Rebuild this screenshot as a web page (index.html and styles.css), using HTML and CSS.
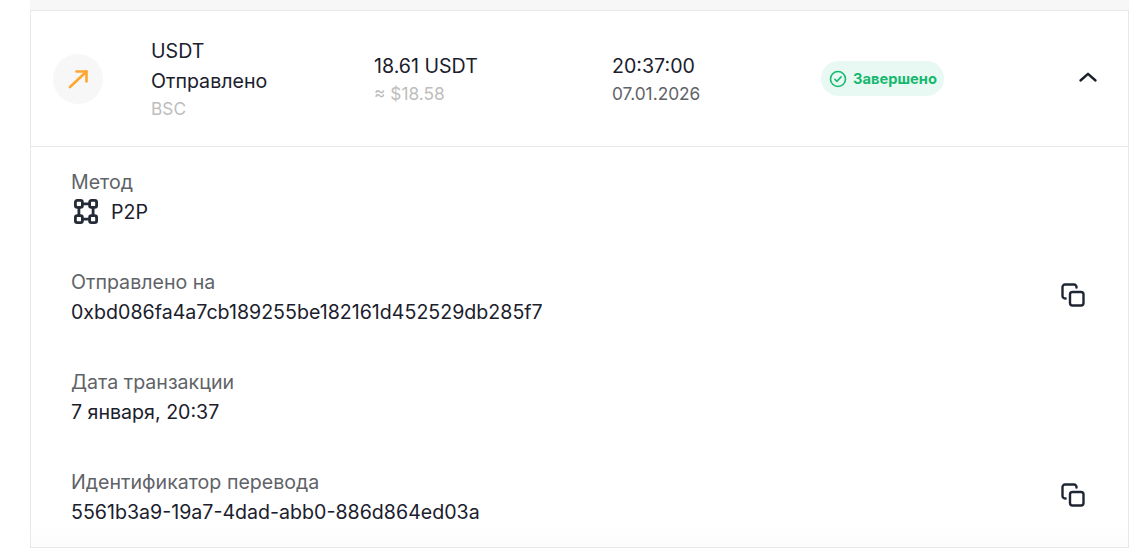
FILE: index.html
```html
<!DOCTYPE html>
<html lang="ru">
<head>
    <meta charset="UTF-8">
    <meta name="viewport" content="width=device-width, initial-scale=1.0">
    <title>Транзакция</title>
    <link rel="stylesheet" href="styles.css">
</head>
<body>
    <div class="top-strip"></div>
    <div class="tx-card">
        <div class="tx-row">
            <div class="tx-icon">
                <svg width="24" height="24" viewBox="0 0 24 24" fill="none" stroke="#ffa630" stroke-width="2.6" stroke-linecap="round" stroke-linejoin="round">
                    <path d="M4 20 L20.5 4.5"/>
                    <path d="M10.5 4.5 H20.5 V14.5"/>
                </svg>
            </div>
            <div class="tx-name">
                <div>USDT</div>
                <div>Отправлено</div>
                <div class="tx-muted">BSC</div>
            </div>
            <div class="tx-amount">
                <div>18.61 USDT</div>
                <div class="tx-muted">≈ $18.58</div>
            </div>
            <div class="tx-time">
                <div>20:37:00</div>
                <div class="tx-date">07.01.2026</div>
            </div>
            <div class="tx-status">
                <span class="status-pill">
                    <svg width="18" height="18" viewBox="0 0 18 18" fill="none" stroke="#16b96f" stroke-width="1.6" stroke-linecap="round" stroke-linejoin="round">
                        <circle cx="9" cy="9" r="7.5"/>
                        <path d="M5.9 9.3 L8 11.3 L12.1 6.9"/>
                    </svg>
                    Завершено
                </span>
            </div>
            <div class="tx-toggle">
                <svg width="20" height="12" viewBox="0 0 20 12" fill="none" stroke="#1a202c" stroke-width="2.4" stroke-linecap="round" stroke-linejoin="round">
                    <path d="M2.5 9.5 L10 2.8 L17.5 9.5"/>
                </svg>
            </div>
        </div>
        <div class="tx-details">
            <div class="detail">
                <div class="detail-text">
                    <div class="detail-label">Метод</div>
                    <div class="detail-method">
                        <svg width="28" height="28" viewBox="0 0 28 28" fill="none" stroke="#252b37" stroke-width="2.8" stroke-linejoin="round">
                            <rect x="4.4" y="2.4" width="7" height="7" rx="1.8"/>
                            <rect x="18.6" y="2.4" width="7" height="7" rx="1.8"/>
                            <rect x="4.4" y="17.6" width="7" height="7" rx="1.8"/>
                            <rect x="18.6" y="17.6" width="7" height="7" rx="1.8"/>
                            <path d="M11.4 5.9 H18.6 M11.4 21.1 H18.6 M7.9 9.4 V17.6 M22.1 9.4 V17.6"/>
                        </svg>
                        <span>P2P</span>
                    </div>
                </div>
            </div>
            <div class="detail">
                <div class="detail-text">
                    <div class="detail-label">Отправлено на</div>
                    <div>0xbd086fa4a7cb189255be182161d452529db285f7</div>
                </div>
                <svg class="copy-icon" width="24" height="24" viewBox="0 0 24 24" fill="none" stroke="#1f2633" stroke-width="2.4" stroke-linecap="round" stroke-linejoin="round">
                    <rect x="9" y="9" width="13.5" height="13.5" rx="2.5"/>
                    <path d="M4.6 15.5 H4 A2.5 2.5 0 0 1 1.5 13 V4 A2.5 2.5 0 0 1 4 1.5 H13 A2.5 2.5 0 0 1 15.5 4 V4.6"/>
                </svg>
            </div>
            <div class="detail">
                <div class="detail-text">
                    <div class="detail-label">Дата транзакции</div>
                    <div>7 января, 20:37</div>
                </div>
            </div>
            <div class="detail">
                <div class="detail-text">
                    <div class="detail-label">Идентификатор перевода</div>
                    <div>5561b3a9-19a7-4dad-abb0-886d864ed03a</div>
                </div>
                <svg class="copy-icon" width="24" height="24" viewBox="0 0 24 24" fill="none" stroke="#1f2633" stroke-width="2.4" stroke-linecap="round" stroke-linejoin="round">
                    <rect x="9" y="9" width="13.5" height="13.5" rx="2.5"/>
                    <path d="M4.6 15.5 H4 A2.5 2.5 0 0 1 1.5 13 V4 A2.5 2.5 0 0 1 4 1.5 H13 A2.5 2.5 0 0 1 15.5 4 V4.6"/>
                </svg>
            </div>
        </div>
    </div>
</body>
</html>
```

FILE: styles.css
```css
/* Page */
html, body {
    height: 100%;
}

body {
    margin: 0;
    padding: 0 6px 0 30px;
    overflow: hidden;
    background: #fff;
    color: #1a202c;
    font-family: 'Inter', sans-serif;
    font-size: 19.6px;
    line-height: 30px;
}

.top-strip {
    height: 10px;
    background: #f7f7f7;
}

/* Card */
.tx-card {
    border: 1px solid #e8e8e8;
}

.tx-row {
    display: grid;
    grid-template-columns: 98px 223px 238px 209px 1fr 40px;
    align-items: center;
    height: 135px;
    padding: 0 30px 0 22px;
    border-bottom: 1px solid #e8e8e8;
}

.tx-icon {
    display: flex;
    align-items: center;
    justify-content: center;
    width: 50px;
    height: 50px;
    border-radius: 50%;
    background: #f7f7f7;
}

.tx-muted {
    color: #bdbdbd;
    font-size: 17.3px;
    line-height: 26px;
}

.tx-date {
    color: #5f6368;
    font-size: 17.3px;
    line-height: 26px;
}

/* Status */
.status-pill {
    display: inline-flex;
    align-items: center;
    gap: 6px;
    height: 35px;
    padding: 0 7px 0 8px;
    border-radius: 18px;
    background: #e8f8f2;
    color: #16b96f;
    font-size: 14.7px;
    font-weight: 700;
}

.tx-toggle {
    display: flex;
    justify-content: flex-end;
    margin-bottom: 4px;
}

/* Details */
.tx-details {
    display: flex;
    flex-direction: column;
    gap: 40px;
    padding: 20px 43px 20px 40px;
    background: linear-gradient(to bottom, #fff calc(100% - 24px), #fcfcfc);
}

.detail {
    display: flex;
    align-items: center;
    justify-content: space-between;
}

.detail-label {
    color: #5f6368;
}

.detail-method {
    display: flex;
    align-items: center;
    gap: 12px;
}

.copy-icon {
    margin-bottom: 4px;
}
```
